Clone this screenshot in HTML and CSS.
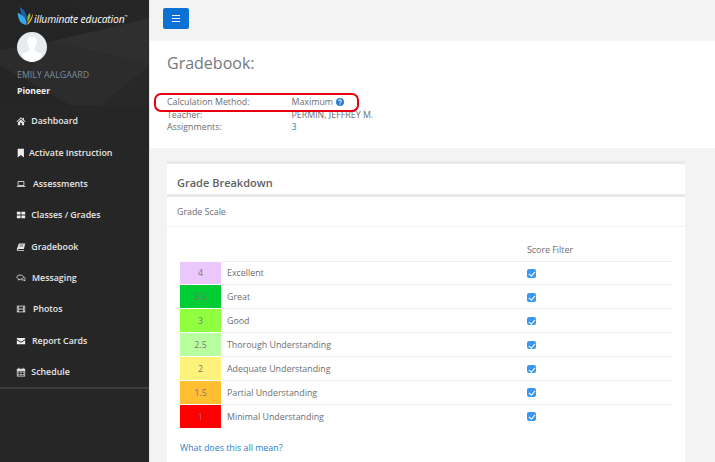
FILE: index.html
```html
<!DOCTYPE html>
<html lang="en">
<head>
<meta charset="utf-8">
<title>Gradebook</title>
<link rel="stylesheet" href="styles.css">
</head>
<body>
<div class="app">
  <aside class="sidebar">
    <div class="profile">
      <svg class="profile-bg" viewBox="0 0 149 106" preserveAspectRatio="none" aria-hidden="true">
        <polygon points="0,50 50,42 149,64 149,106 70,106 0,66" fill="#2c2c2c"/>
        <polygon points="50,42 149,18 149,64" fill="#2f2f2f"/>
        <polygon points="70,0 149,0 149,18 95,30" fill="#262626"/>
        <polygon points="0,66 70,106 0,106" fill="#252525"/>
        <polygon points="100,106 149,66 149,106" fill="#282828"/>
      </svg>
      <div class="logo">
        <svg class="logo-mark" viewBox="0 0 16 18" aria-hidden="true">
          <path d="M3 0 C6 2 9 5 9.500 9 L9.500 15 C7.500 11 4.500 8 3.800 5 C3.500 3.500 3 2 3 0Z" fill="#1d5fa8"/>
          <path d="M0.500 6 C4 6.500 8 10 9.500 15 L9.500 18 C6.500 17.500 3.500 16 2.500 13.500 C1.500 11 0.800 8.500 0.500 6Z" fill="#35a7e6"/>
          <path d="M13 6 C14 8 13 12 10.500 15 L10.300 11 C10.500 9 11.500 7 13 6Z" fill="#8dbb3f"/>
          <path d="M16 6.500 C16 10 15 14 10.500 18 L10.500 15.500 C13 13.500 14.500 10 16 6.500Z" fill="#eda72a"/>
        </svg>
        <span class="logo-text">illuminate education</span><span class="logo-tm">™</span>
      </div>
      <div class="avatar">
        <svg viewBox="0 0 31 31" aria-hidden="true">
          <circle cx="15.500" cy="15.500" r="15.500" fill="#e7eaee"/>
          <path d="M15.500 4.500 C19 4.500 20.500 7.500 20.300 10.500 C20.100 13 19 15 18 16.500 L18.300 19 C20 20.500 24 21 26.500 23.500 C23.800 27.800 19.800 31 15.500 31 C11.200 31 7.200 27.800 4.500 23.500 C7 21 11 20.500 12.700 19 L13 16.500 C12 15 10.900 13 10.700 10.500 C10.500 7.500 12 4.500 15.500 4.500Z" fill="#fff"/>
        </svg>
      </div>
      <div class="user-name">EMILY AALGAARD</div>
      <div class="user-school">Pioneer</div>
    </div>
    <nav class="menu">
      <a class="menu-item"><svg class="ico" viewBox="0 0 12 12"><path d="M6 1.500 L0.500 6.500 L1.300 7.200 L6 3 L10.700 7.200 L11.500 6.500 L9.500 4.700 V2 H8.200 V3.500Z M2.300 7.500 V11 H5 V8 H7 V11 H9.700 V7.500 L6 4.200Z" fill="#e6e6e6"/></svg><span>Dashboard</span></a>
      <a class="menu-item menu-tight"><svg class="ico" viewBox="0 0 12 12"><path d="M2 1 H9.500 V11.500 L5.750 8.500 L2 11.500Z" fill="#eee"/></svg><span>Activate Instruction</span></a>
      <a class="menu-item menu-wide"><svg class="ico" viewBox="0 0 12 12"><path d="M2.500 3 H9.500 V7.800 H2.500Z" fill="none" stroke="#e6e6e6"/><path d="M0.800 8.500 H11.200 V9.500 H0.800Z" fill="#e6e6e6"/></svg><span>Assessments</span></a>
      <a class="menu-item"><svg class="ico" viewBox="0 0 12 12"><path d="M1 2 H5.500 V5.500 H1Z M6.500 2 H11 V5.500 H6.500Z M1 6.500 H5.500 V10 H1Z M6.500 6.500 H11 V10 H6.500Z" fill="#eee"/></svg><span>Classes / Grades</span></a>
      <a class="menu-item"><svg class="ico" viewBox="0 0 12 12"><path d="M3.500 1.800 H11 L9.500 8.500 H3 C2 8.500 2 9.500 3 9.500 H9.800 L9.500 10.500 H2.200 C0.800 10.500 0.800 9 1.200 8Z" fill="#e6e6e6"/><path d="M4.500 3.500 H9 M4 5 H8.500" stroke="#262626" stroke-width=".6"/></svg><span>Gradebook</span></a>
      <a class="menu-item menu-mid"><svg class="ico" viewBox="0 0 12 12"><path d="M5 2.500 C7.300 2.500 9 3.600 9 5 C9 6.400 7.300 7.500 5 7.500 L3 8.500 L3.300 7.200 C2 6.800 1 6 1 5 C1 3.600 2.700 2.500 5 2.500Z" fill="none" stroke="#e6e6e6"/><path d="M9.800 5 C11 5.500 11.400 6.800 10.600 7.800 L10.800 9.200 L8.500 8.300 L6.500 8.300" fill="none" stroke="#e6e6e6"/></svg><span>Messaging</span></a>
      <a class="menu-item menu-wide"><svg class="ico" viewBox="0 0 12 12"><path d="M1 2 H11 V10 H1Z" fill="#ddd"/><path d="M3.500 3 H8.500 V5.500 H3.500Z M3.500 6.500 H8.500 V9 H3.500Z M1.600 3 H2.800 V4 H1.600Z M1.600 5 H2.800 V6 H1.600Z M1.600 7 H2.800 V8 H1.600Z M9.200 3 H10.400 V4 H9.200Z M9.200 5 H10.400 V6 H9.200Z M9.200 7 H10.400 V8 H9.200Z" fill="#262626"/></svg><span>Photos</span></a>
      <a class="menu-item menu-mid"><svg class="ico" viewBox="0 0 12 12"><path d="M1 2.500 H11 V4 L6 7 L1 4Z M1 5 L6 8 L11 5 V10 H1Z" fill="#eee"/></svg><span>Report Cards</span></a>
      <a class="menu-item"><svg class="ico" viewBox="0 0 12 12"><path d="M3 1 H4 V2 H8 V1 H9 V2 H11 V11.500 H1 V2 H3Z" fill="#ddd"/><path d="M2 5 H10 V10.500 H2Z" fill="#262626"/><path d="M2.500 5.500 H4 V7 H2.500Z M5 5.500 H7 V7 H5Z M8 5.500 H9.500 V7 H8Z M2.500 8 H4 V9.800 H2.500Z M5 8 H7 V9.800 H5Z M8 8 H9.500 V9.800 H8Z" fill="#ccc"/></svg><span>Schedule</span></a>
    </nav>
  </aside>
  <main class="main">
    <header class="topbar">
      <button class="toggle" type="button" aria-label="Menu"><span></span><span></span><span></span></button>
    </header>
    <section class="page-head">
      <h1>Gradebook:</h1>
      <dl class="meta">
        <div class="meta-row"><dt>Calculation Method:</dt><dd>Maximum <svg class="help" viewBox="0 0 10 10"><circle cx="5" cy="5" r="4" fill="#2b7fd0"/><path d="M3.500 4 C3.500 2.500 6.500 2.500 6.500 4 C6.500 5 5 5 5 6" fill="none" stroke="#fff" stroke-width="1"/><path d="M4.500 6.600 H5.500 V7.600 H4.500Z" fill="#fff"/></svg></dd></div>
        <div class="meta-row"><dt>Teacher:</dt><dd>PERMIN, JEFFREY M.</dd></div>
        <div class="meta-row"><dt>Assignments:</dt><dd><a class="link">3</a></dd></div>
      </dl>
      <div class="callout"></div>
    </section>
    <section class="content">
      <div class="card">
        <h2 class="card-title">Grade Breakdown</h2>
        <div class="card-sub">Grade Scale</div>
        <div class="card-body">
          <table class="scale">
            <thead>
              <tr><th class="c-score"></th><th class="c-label"></th><th class="c-filter">Score Filter</th></tr>
            </thead>
            <tbody>
              <tr><td class="swatch g40">4</td><td>Excellent</td><td class="c-check"><span class="check"></span></td></tr>
              <tr><td class="swatch g35">3.5</td><td>Great</td><td class="c-check"><span class="check"></span></td></tr>
              <tr><td class="swatch g30">3</td><td>Good</td><td class="c-check"><span class="check"></span></td></tr>
              <tr><td class="swatch g25">2.5</td><td>Thorough Understanding</td><td class="c-check"><span class="check"></span></td></tr>
              <tr><td class="swatch g20">2</td><td>Adequate Understanding</td><td class="c-check"><span class="check"></span></td></tr>
              <tr><td class="swatch g15">1.5</td><td>Partial Understanding</td><td class="c-check"><span class="check"></span></td></tr>
              <tr><td class="swatch g10">1</td><td>Minimal Understanding</td><td class="c-check"><span class="check"></span></td></tr>
            </tbody>
          </table>
          <a class="link more">What does this all mean?</a>
        </div>
      </div>
    </section>
  </main>
</div>
</body>
</html>
```

FILE: styles.css
```css
* { box-sizing: border-box; }
html, body { margin: 0; height: 100%; overflow: hidden; }
body { font-family: "Open Sans", sans-serif; font-size: 8.850px; color: #6b6e70; background: #f3f3f4; }
.app { display: flex; height: 462px; }

.sidebar { width: 150px; flex: none; background: #262626; border-right: 1px solid #e7e7e7; }
.profile { position: relative; height: 105.500px; background: #242424; padding: 7px 0 0 17px; overflow: hidden; }
.profile-bg { position: absolute; inset: 0; width: 100%; height: 100%; }
.logo, .avatar, .user-name, .user-school { position: relative; }
.logo { display: flex; height: 18px; color: #fff; }
.logo-mark { width: 16px; height: 18px; flex: none; }
.logo-text { font-style: italic; font-size: 10.300px; line-height: 10px; font-weight: 500; letter-spacing: -0.15px; margin: 7px 0 0 1px; }
.logo-tm { font-size: 4px; line-height: 5px; margin-top: 7px; }
.avatar { width: 30px; height: 30px; margin-top: 7px; }
.avatar svg { display: block; width: 30px; height: 30px; }
.user-name { margin-top: 7px; font-size: 8.800px; line-height: 12px; color: #7f8b9b; white-space: nowrap; }
.user-school { margin-top: 4px; font-size: 8.600px; line-height: 12px; font-weight: 700; color: #f0f0f0; }

.menu { border-bottom: 2px solid #3d3d3d; height: 283px; display: flex; flex-direction: column; }
.menu-item { display: flex; align-items: center; flex: none; height: 31.350px; padding-left: 16px; gap: 5.300px; color: #e6e6e6; font-size: 8.800px; font-weight: 600; white-space: nowrap; }
.menu-tight { gap: 3px; }
.menu-mid { gap: 6px; }
.menu-wide { gap: 7px; }
.ico { width: 10px; height: 10px; flex: none; }

.main { flex: 1; min-width: 0; display: flex; flex-direction: column; }
.topbar { height: 41px; flex: none; background: #f3f3f4; padding: 8px 13px; }
.toggle { display: flex; flex-direction: column; justify-content: center; align-items: center; gap: 1.500px; width: 26px; height: 21px; padding: 0; border: 0; border-radius: 2px; background: #0b72d3; }
.toggle span { display: block; width: 8px; height: 1.500px; background: #fff; }

.page-head { position: relative; height: 107px; flex: none; background: #fff; padding: 11px 17px 0; }
.page-head h1 { margin: 0; font-size: 16px; font-weight: 400; line-height: 22px; color: #75787a; }
.meta { margin: 22px 0 0; }
.meta-row { display: flex; height: 12.500px; line-height: 12.500px; }
.meta dt { width: 124.500px; }
.meta dd { margin: 0; }
.help { width: 10px; height: 10px; vertical-align: -1.500px; }
.link { color: #2d7fc9; }
.callout { position: absolute; left: 4px; top: 52px; width: 205px; height: 19px; border: 2px solid #e60012; border-radius: 7px; }

.content { flex: 1; min-height: 0; display: flex; padding: 13px 30px 0 17px; }
.card { flex: 1; background: #fff; border-top: 3px solid #e7eaec; }
.card-title { margin: 0; height: 33px; padding: 0 10px; border-bottom: 3px solid #e7eaec; font-size: 11px; font-weight: 600; line-height: 38px; color: #5f6264; }
.card-sub { height: 30px; padding: 1px 10px 0; border-bottom: 1px solid #f3f3f4; line-height: 29px; }
.card-body { padding: 11px 13px 0; }
.scale { width: 492px; border-collapse: collapse; table-layout: fixed; }
.scale th { height: 23px; font-weight: 400; text-align: left; padding: 1px 0 0; }
.scale td { height: 23.850px; padding: 1px 0 0 6px; border-top: 1px solid #eef0f1; }
.scale .c-score { width: 41px; }
.scale .c-label { width: 306px; }
.scale .swatch { padding: 1px 0 0; text-align: center; border-top-color: #fff; color: #77777a; }
.scale .c-check { padding: 1px 0 0; }
.g40 { background: #ebc7fb; }
.g35 { background: #00cc33; }
.g30 { background: #8fff40; }
.g25 { background: #b8ff9f; }
.g20 { background: #fff27a; }
.g15 { background: #ffbf30; }
.g10 { background: #ff0000; }
.check { display: block; position: relative; width: 8.500px; height: 8.500px; border-radius: 2px; background: #3b96f5; }
.check::after { content: ""; position: absolute; left: 3px; top: 1px; width: 2.500px; height: 5px; border: solid #fff; border-width: 0 1px 1px 0; transform: rotate(40deg); }
.more { display: block; margin-top: 13px; line-height: 14px; }
```
